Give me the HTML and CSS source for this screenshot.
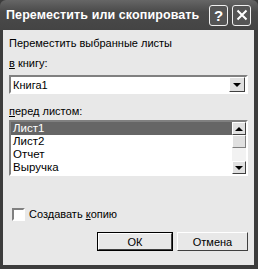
FILE: index.html
```html
<!DOCTYPE html>
<html lang="ru">
<head>
  <meta charset="UTF-8" />
  <title>Переместить или скопировать</title>
  <link rel="stylesheet" href="styles.css">
</head>
<body>

  <div class="window">
    <div class="titlebar">
      <span class="title">Переместить или скопировать</span>
      <div class="caption-btn">?</div>
      <div class="caption-btn close">
        <svg width="12" height="12" viewBox="0 0 12 12">
          <path d="M1.5 1.5 L10.5 10.5 M10.5 1.5 L1.5 10.5" stroke="#fff" stroke-width="2" />
        </svg>
      </div>
    </div>

    <div class="content">
      <div class="text">Переместить выбранные листы</div>
      <div class="label"><u>в</u> книгу:</div>

      <div class="combo">
        <span class="combo-value">Книга1</span>
        <div class="arrow-btn"><span class="tri down"></span></div>
      </div>

      <div class="label second"><u>п</u>еред листом:</div>

      <div class="listbox">
        <div class="items">
          <div class="item selected">Лист1</div>
          <div class="item">Лист2</div>
          <div class="item">Отчет</div>
          <div class="item">Выручка</div>
        </div>
        <div class="scrollbar">
          <div class="arrow-btn"><span class="tri up"></span></div>
          <div class="thumb"></div>
          <div class="track"></div>
          <div class="arrow-btn"><span class="tri down"></span></div>
        </div>
      </div>

      <div class="check-row">
        <span class="checkbox"></span>
        <span>Создавать <u>к</u>опию</span>
      </div>

      <div class="buttons">
        <div class="btn default">ОК</div>
        <div class="btn cancel">Отмена</div>
      </div>
    </div>
  </div>

</body>
</html>
```

FILE: styles.css
```css
body {
  margin: 0;
  background: #fff;
  font-family: 'Liberation Sans', Arial, sans-serif;
  font-size: 11px;
  color: #000;
}

.window {
  width: 258px;
  height: 269px;
  box-sizing: border-box;
  background: #3c3c3c;
  padding: 0 4px 4px 3px;
  display: flex;
  flex-direction: column;
}

.titlebar {
  height: 30px;
  flex-shrink: 0;
  display: flex;
  align-items: center;
  background: linear-gradient(#666, #4a4a4a 40%, #444);
  margin: 0 -4px 0 -3px;
  padding-left: 6px;
  padding-right: 7px;
  border-radius: 6px 6px 0 0;
}

.title {
  flex: 1;
  color: #fff;
  font-weight: bold;
  font-size: 12.5px;
  letter-spacing: 0.1px;
  white-space: nowrap;
  overflow: hidden;
}

.caption-btn {
  width: 17px;
  height: 19px;
  flex-shrink: 0;
  margin-left: 4px;
  border: 1px solid #f0f0f0;
  border-radius: 3px;
  background: #555;
  color: #fff;
  font-weight: bold;
  font-size: 15px;
  display: flex;
  align-items: center;
  justify-content: center;
}

.content {
  flex: 1;
  background: #e8e8e8;
  padding: 0 6px 0 6px;
  display: flex;
  flex-direction: column;
}

.text {
  margin-top: 7px;
  line-height: 13px;
}

.label {
  margin-top: 7px;
  line-height: 13px;
}

.label.second {
  margin-top: 11px;
}

.combo {
  margin-top: 5px;
  height: 19px;
  box-sizing: border-box;
  border: 2px solid;
  border-color: #808080 #fff #fff #808080;
  background: #fff;
  display: flex;
  align-items: center;
  padding: 0 1px 0 2px;
}

.combo-value {
  flex: 1;
}

.arrow-btn {
  width: 14px;
  height: 13px;
  box-sizing: border-box;
  background: #e0e0e0;
  border: 1px solid;
  border-color: #fff #404040 #404040 #fff;
  display: flex;
  align-items: center;
  justify-content: center;
}

.combo .arrow-btn {
  width: 16px;
  height: 15px;
}

.tri {
  width: 0;
  height: 0;
  border-left: 4px solid transparent;
  border-right: 4px solid transparent;
}

.tri.down {
  border-top: 4px solid #000;
}

.tri.up {
  border-bottom: 4px solid #000;
}

.listbox {
  margin-top: 2px;
  height: 56px;
  box-sizing: border-box;
  border: 2px solid;
  border-color: #808080 #fff #fff #808080;
  background: #fff;
  display: flex;
}

.items {
  flex: 1;
}

.item {
  line-height: 13px;
  height: 13px;
  padding-left: 2px;
  font-size: 11.5px;
}

.item.selected {
  background: #666;
  color: #fff;
}

.scrollbar {
  width: 14px;
  display: flex;
  flex-direction: column;
}

.thumb {
  height: 13px;
  box-sizing: border-box;
  background: #e0e0e0;
  border: 1px solid;
  border-color: #fff #808080 #808080 #fff;
}

.track {
  flex: 1;
  background: #f2f2f2;
}

.check-row {
  margin-top: 32px;
  display: flex;
  align-items: center;
  gap: 4px;
  padding-left: 3px;
  line-height: 13px;
}

.checkbox {
  width: 13px;
  height: 13px;
  box-sizing: border-box;
  background: #fff;
  border: 2px solid;
  border-color: #808080 #fff #fff #808080;
}

.buttons {
  margin-top: 11px;
  display: flex;
  justify-content: flex-end;
  gap: 4px;
}

.btn {
  width: 76px;
  height: 19px;
  box-sizing: border-box;
  border: 1px solid;
  border-color: #fff #404040 #404040 #fff;
  background: #e8e8e8;
  display: flex;
  align-items: center;
  justify-content: center;
}

.btn.cancel {
  width: 71px;
}

.btn.default {
  outline: 1px solid #000;
  outline-offset: -1px;
  border-width: 2px;
}
```
